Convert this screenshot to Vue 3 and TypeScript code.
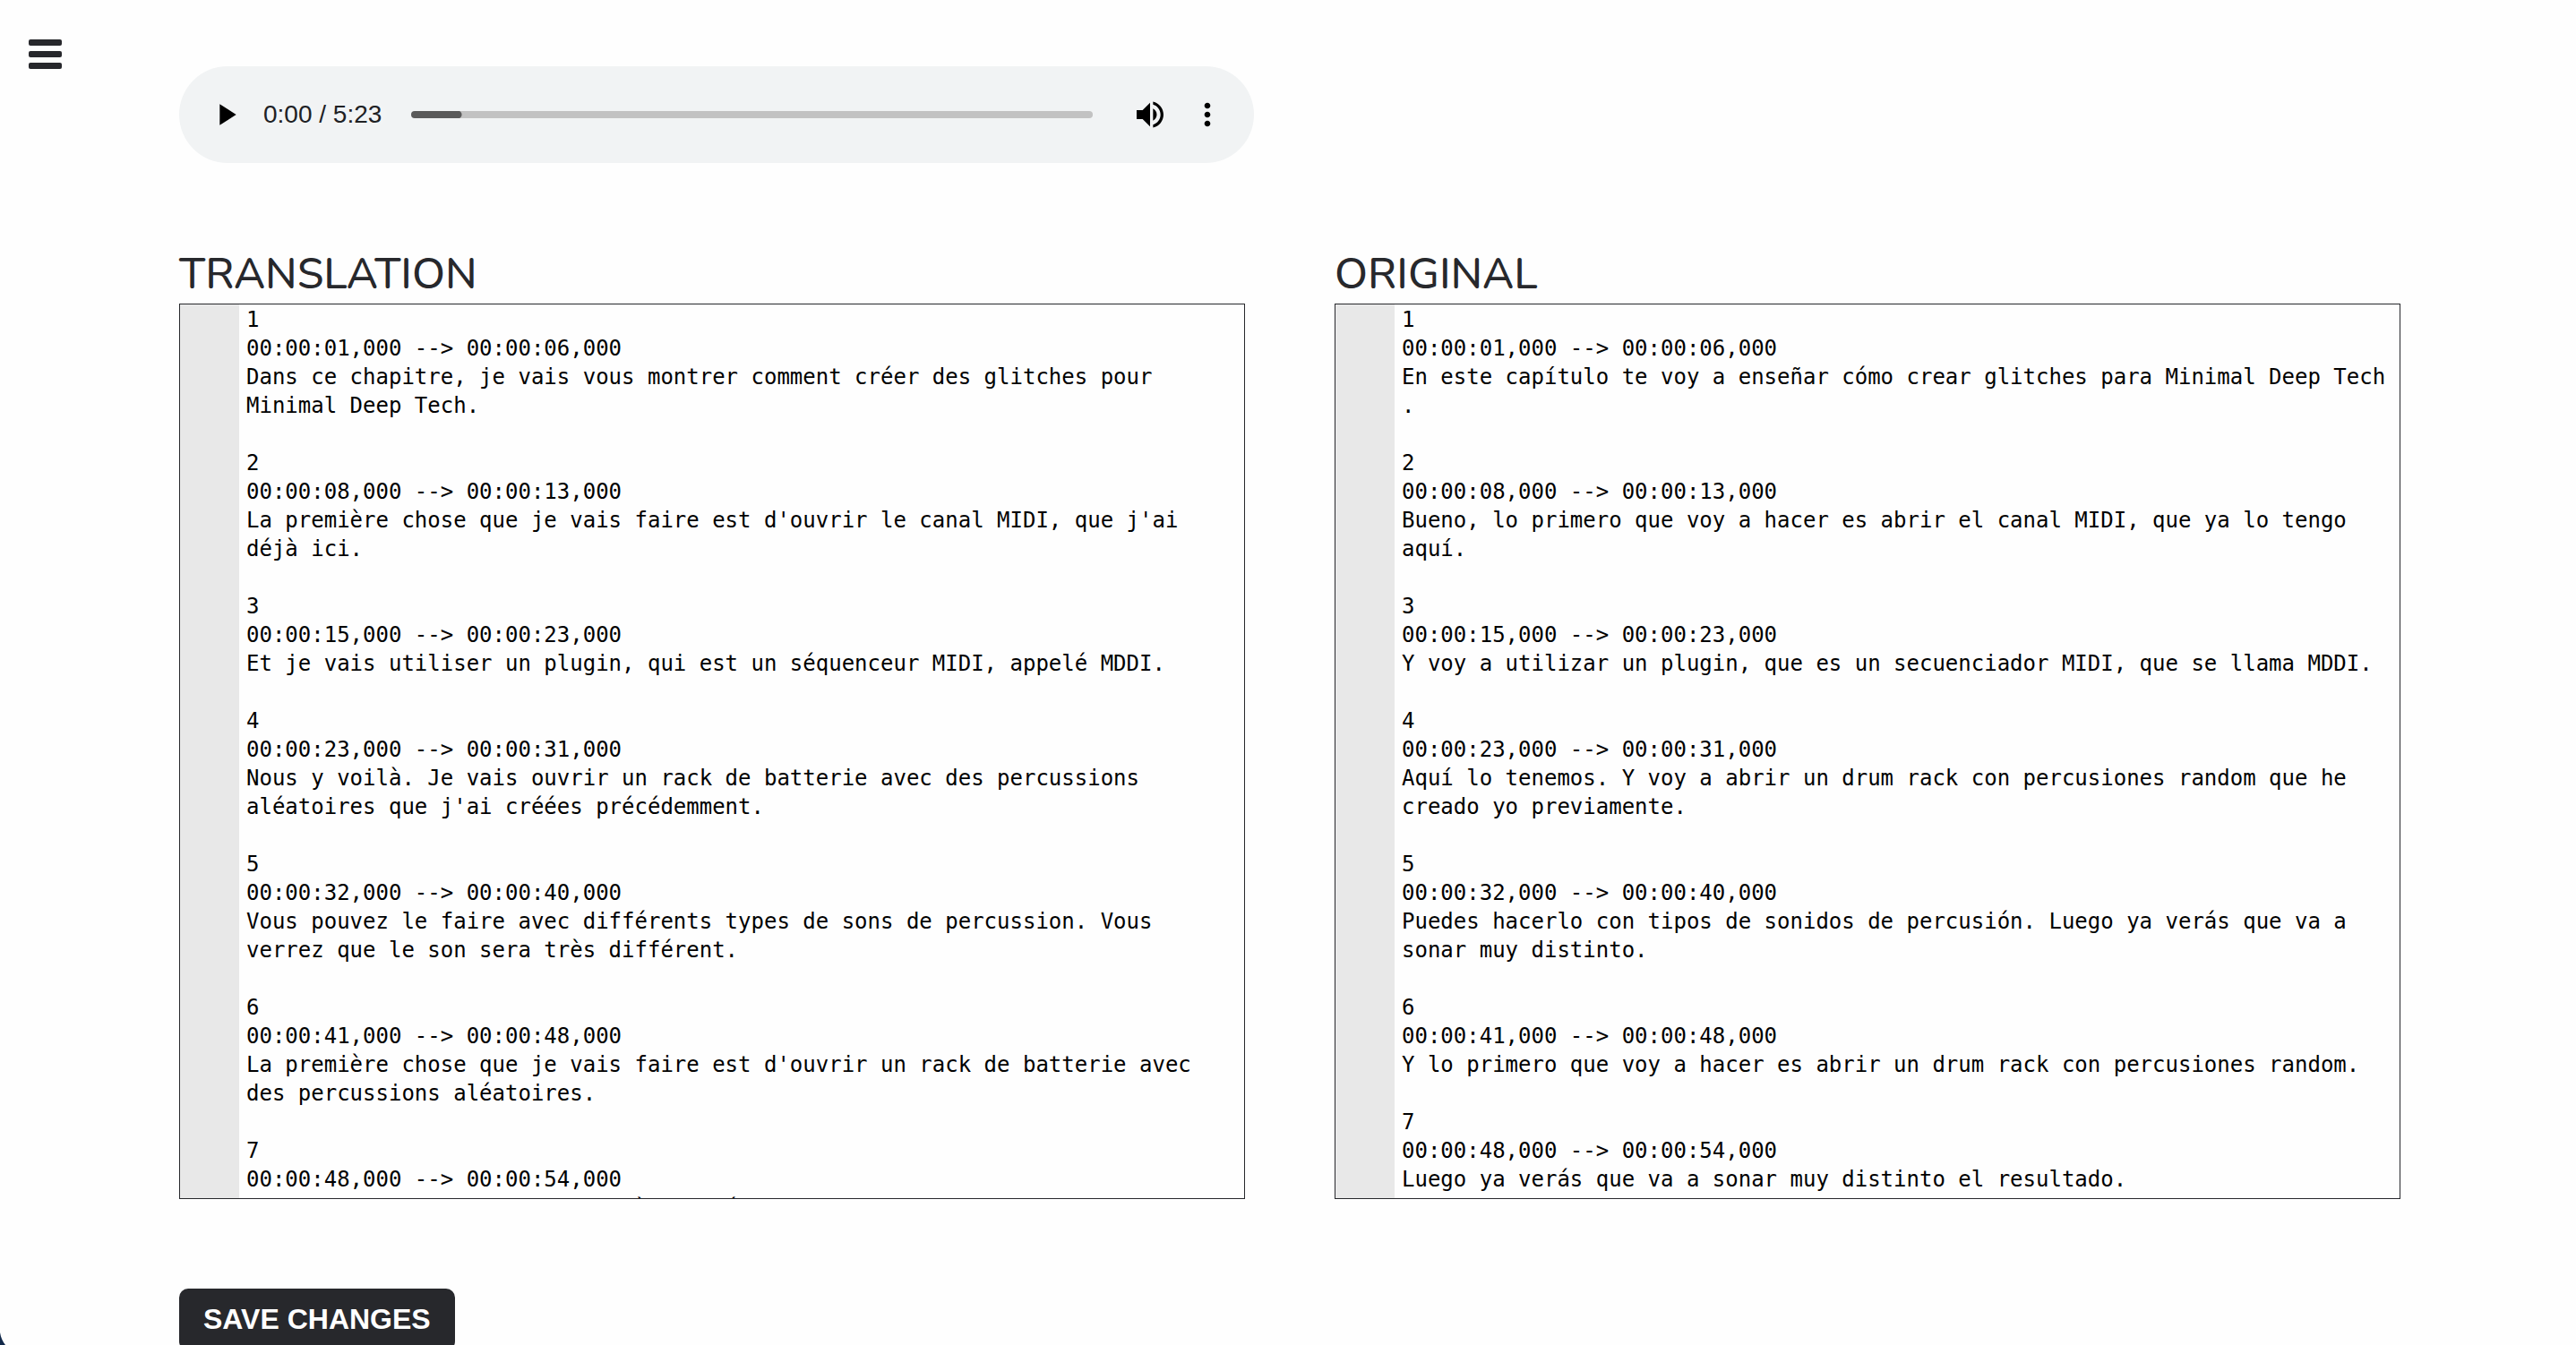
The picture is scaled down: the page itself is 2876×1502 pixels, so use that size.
<script setup lang="ts">
import { ref } from 'vue'

interface Track {
  id: string
  title: string
  text: string
}

const tracks = ref<Track[]>([
  {
    id: 'translation',
    title: 'TRANSLATION',
    text: `1
00:00:01,000 --> 00:00:06,000
Dans ce chapitre, je vais vous montrer comment créer des glitches pour
Minimal Deep Tech.

2
00:00:08,000 --> 00:00:13,000
La première chose que je vais faire est d'ouvrir le canal MIDI, que j'ai
déjà ici.

3
00:00:15,000 --> 00:00:23,000
Et je vais utiliser un plugin, qui est un séquenceur MIDI, appelé MDDI.

4
00:00:23,000 --> 00:00:31,000
Nous y voilà. Je vais ouvrir un rack de batterie avec des percussions
aléatoires que j'ai créées précédemment.

5
00:00:32,000 --> 00:00:40,000
Vous pouvez le faire avec différents types de sons de percussion. Vous
verrez que le son sera très différent.

6
00:00:41,000 --> 00:00:48,000
La première chose que je vais faire est d'ouvrir un rack de batterie avec
des percussions aléatoires.

7
00:00:48,000 --> 00:00:54,000
Vous verrez que le son sera très différent.`,
  },
  {
    id: 'original',
    title: 'ORIGINAL',
    text: `1
00:00:01,000 --> 00:00:06,000
En este capítulo te voy a enseñar cómo crear glitches para Minimal Deep Tech
.

2
00:00:08,000 --> 00:00:13,000
Bueno, lo primero que voy a hacer es abrir el canal MIDI, que ya lo tengo
aquí.

3
00:00:15,000 --> 00:00:23,000
Y voy a utilizar un plugin, que es un secuenciador MIDI, que se llama MDDI.

4
00:00:23,000 --> 00:00:31,000
Aquí lo tenemos. Y voy a abrir un drum rack con percusiones random que he
creado yo previamente.

5
00:00:32,000 --> 00:00:40,000
Puedes hacerlo con tipos de sonidos de percusión. Luego ya verás que va a
sonar muy distinto.

6
00:00:41,000 --> 00:00:48,000
Y lo primero que voy a hacer es abrir un drum rack con percusiones random.

7
00:00:48,000 --> 00:00:54,000
Luego ya verás que va a sonar muy distinto el resultado.`,
  },
])

const position = ref(0)
</script>

<template>
  <div class="page">
    <button class="menu" type="button" aria-label="Open menu">
      <span class="menu-bar"></span>
      <span class="menu-bar"></span>
      <span class="menu-bar"></span>
    </button>

    <main class="content">
      <section class="player" aria-label="Audio player">
        <button class="icon-button" type="button" aria-label="Play">
          <svg viewBox="0 0 24 24"><path d="M8 5v14l11-7z" /></svg>
        </button>
        <span class="time">0:00 / 5:23</span>
        <input v-model="position" class="seek" type="range" min="0" max="323" aria-label="Seek" />
        <button class="icon-button volume" type="button" aria-label="Mute">
          <svg viewBox="0 0 24 24">
            <path
              d="M3 9v6h4l5 5V4L7 9H3zm13.5 3c0-1.77-1.02-3.29-2.5-4.03v8.05c1.48-.73 2.5-2.25 2.5-4.02zM14 3.23v2.06c2.89.86 5 3.54 5 6.71s-2.11 5.85-5 6.71v2.06c4.01-.91 7-4.49 7-8.77s-2.99-7.86-7-8.77z"
            />
          </svg>
        </button>
        <button class="icon-button" type="button" aria-label="More options">
          <svg viewBox="0 0 24 24">
            <path
              d="M12 8c1.1 0 2-.9 2-2s-.9-2-2-2-2 .9-2 2 .9 2 2 2zm0 2c-1.1 0-2 .9-2 2s.9 2 2 2 2-.9 2-2-.9-2-2-2zm0 6c-1.1 0-2 .9-2 2s.9 2 2 2 2-.9 2-2-.9-2-2-2z"
            />
          </svg>
        </button>
      </section>

      <div class="tracks">
        <section v-for="track in tracks" :key="track.id" class="track">
          <label class="title" :for="track.id">{{ track.title }}</label>
          <div class="editor">
            <div class="gutter"></div>
            <textarea
              :id="track.id"
              v-model="track.text"
              class="source"
              wrap="off"
              spellcheck="false"
            ></textarea>
          </div>
        </section>
      </div>

      <button class="save" type="button">SAVE CHANGES</button>
    </main>

    <svg class="corner" viewBox="0 0 6 14" aria-hidden="true">
      <path d="M0 0C1 6 3 10 6 14H0z" />
    </svg>
  </div>
</template>

<style>
body {
  margin: 0;
  background: #fefefe;
  overflow: hidden;
}
</style>

<style scoped>
.page {
  position: relative;
  box-sizing: border-box;
  height: 100vh;
  overflow: hidden;
  padding: 74px 196px 0 200px;
  color: #27282c;
  font-family: "Liberation Sans", Arial, sans-serif;
}

button {
  border: 0;
  padding: 0;
  background: none;
  cursor: pointer;
}

.menu {
  position: absolute;
  top: 44px;
  left: 32px;
  display: flex;
  flex-direction: column;
  gap: 6px;
  width: 37px;
}

.menu-bar {
  height: 7px;
  border-radius: 2px;
  background: #27282c;
}

.content {
  display: flex;
  flex-direction: column;
  align-items: flex-start;
}

.player {
  display: flex;
  align-items: center;
  box-sizing: border-box;
  width: calc(50% - 40px);
  height: 108px;
  padding: 0 32px;
  border-radius: 54px;
  background: #f1f3f4;
}

.icon-button {
  flex: none;
  width: 40px;
  height: 40px;
}

.icon-button svg {
  display: block;
  width: 40px;
  height: 40px;
  fill: #000;
}

.time {
  margin: 0 33px 0 22px;
  font-size: 28px;
  line-height: 40px;
  white-space: nowrap;
  color: #202124;
  text-shadow: 0 0 20px #fff;
}

.seek {
  flex: 1;
  min-width: 0;
  height: 8px;
  margin: 0 44px 0 0;
  appearance: none;
  border-radius: 4px;
  background: linear-gradient(#5a5a5a, #5a5a5a) 0 0 / 52px 8px no-repeat,
    radial-gradient(circle at 52px 4px, #5a5a5a 4px, transparent 5px), #c2c2c2;
}

.seek::-webkit-slider-thumb {
  appearance: none;
  width: 1px;
  height: 8px;
  opacity: 0;
}

.volume {
  margin-right: 24px;
}

.tracks {
  display: flex;
  gap: 100px;
  width: 100%;
  margin-top: 93px;
}

.track {
  flex: 1;
  min-width: 0;
}

.title {
  display: block;
  margin-bottom: 2px;
  font-family: Nunito, Lato, sans-serif;
  font-size: 48px;
  font-weight: 500;
  line-height: 62px;
}

.editor {
  display: flex;
  box-sizing: border-box;
  height: calc(100vh - 502px);
  border: 1px solid #27282c;
}

.gutter {
  flex: none;
  width: 66px;
  background: #e8e8e8;
}

.source {
  flex: 1;
  min-width: 0;
  margin: 0;
  border: 0;
  padding: 1px 8px 0;
  overflow: hidden;
  resize: none;
  outline: 0;
  background: transparent;
  color: #000;
  font-family: Monaco, "DejaVu Sans Mono", monospace;
  font-size: 24px;
  line-height: 32px;
}

.save {
  flex: none;
  height: 69px;
  margin-top: 100px;
  padding: 0 27px;
  border-radius: 10px;
  background: #27282c;
  color: #fff;
  font-family: inherit;
  font-size: 32px;
  font-weight: 700;
}

.corner {
  position: absolute;
  bottom: 0;
  left: 0;
  width: 6px;
  height: 14px;
  fill: #12294a;
}
</style>
